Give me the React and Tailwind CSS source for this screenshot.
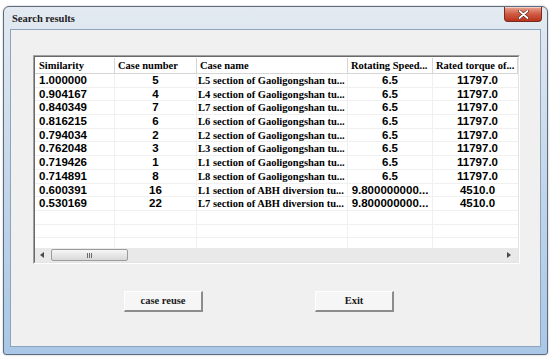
import React from "react";

const rows = [
  ["1.000000", "5", "L5 section of Gaoligongshan tu...", "6.5", "11797.0"],
  ["0.904167", "4", "L4 section of Gaoligongshan tu...", "6.5", "11797.0"],
  ["0.840349", "7", "L7 section of Gaoligongshan tu...", "6.5", "11797.0"],
  ["0.816215", "6", "L6 section of Gaoligongshan tu...", "6.5", "11797.0"],
  ["0.794034", "2", "L2 section of Gaoligongshan tu...", "6.5", "11797.0"],
  ["0.762048", "3", "L3 section of Gaoligongshan tu...", "6.5", "11797.0"],
  ["0.719426", "1", "L1 section of Gaoligongshan tu...", "6.5", "11797.0"],
  ["0.714891", "8", "L8 section of Gaoligongshan tu...", "6.5", "11797.0"],
  ["0.600391", "16", "L1 section of ABH diversion tu...", "9.800000000...", "4510.0"],
  ["0.530169", "22", "L7 section of ABH diversion tu...", "9.800000000...", "4510.0"],
];

const serif = "[font-family:'Liberation_Serif',serif]";

function Row({ r }) {
  return (
    <div className="flex h-[13.7px] shrink-0 border-b border-[#f0f0f0] text-[11.5px] font-bold leading-[13px] text-black">
      <div className="w-[80px] shrink-0 border-r border-[#f0f0f0] pl-[4px] [font-family:'Liberation_Sans',sans-serif]">{r[0]}</div>
      <div className="w-[82px] shrink-0 border-r border-[#f0f0f0] text-center [font-family:'Liberation_Sans',sans-serif]">{r[1]}</div>
      <div className="w-[151px] shrink-0 overflow-hidden whitespace-nowrap border-r border-[#f0f0f0] pl-[1px] text-[10.5px] [font-family:'Liberation_Serif',serif]">{r[2]}</div>
      <div className="w-[85px] shrink-0 border-r border-[#f0f0f0] text-center [font-family:'Liberation_Sans',sans-serif]">{r[3]}</div>
      <div className="w-[85px] shrink-0 pl-[4px] text-center [font-family:'Liberation_Sans',sans-serif]">{r[4]}</div>
    </div>
  );
}

function EmptyRow() {
  return (
    <div className="flex h-[13.7px] shrink-0 border-b border-[#f0f0f0]">
      <div className="w-[80px] shrink-0 border-r border-[#f0f0f0]" />
      <div className="w-[82px] shrink-0 border-r border-[#f0f0f0]" />
      <div className="w-[151px] shrink-0 border-r border-[#f0f0f0]" />
      <div className="w-[85px] shrink-0 border-r border-[#f0f0f0]" />
      <div className="w-[85px] shrink-0" />
    </div>
  );
}

function Button({ children }) {
  return (
    <div className="flex h-[21px] w-[79px] items-center justify-center border border-b-[2px] border-r-[2px] border-t-white border-l-white border-b-[#8c8c8c] border-r-[#8c8c8c] bg-[#f6f6f6] text-[10.5px] font-bold text-[#1a1a1a] [font-family:'Liberation_Serif',serif]">
      {children}
    </div>
  );
}

export default function App() {
  return (
    <div className="h-[361px] w-[550px] overflow-hidden bg-white pl-[3px] pt-[6px]">
      <div className="flex h-[349px] w-[545px] flex-col rounded-t-[6px] rounded-b-[3px] border border-[#5d6b7c] bg-gradient-to-b from-[#e3eaf1] via-[#c3d6ea] to-[#a9c7e6] shadow-[0_0_2px_rgba(0,0,0,0.3)]">
        <div className="flex h-[22px] shrink-0 items-start justify-between pl-[8px] pr-[5px]">
          <div className={`mt-[6px] text-[10.5px] font-bold leading-[12px] text-[#1c1c1c] ${serif}`}>Search results</div>
          <div className="flex h-[15px] w-[38px] items-center justify-center rounded-b-[4px] border border-t-0 border-[#7b2a20] bg-gradient-to-b from-[#e9a593] via-[#d05a42] to-[#b8321c] shadow-[inset_0_1px_0_rgba(255,255,255,0.5)]">
            <svg width="11" height="9" viewBox="0 0 11 9">
              <path d="M1.5 1 L9.5 8 M9.5 1 L1.5 8" stroke="#5a1a10" strokeWidth="3" strokeLinecap="round" />
              <path d="M1.5 1 L9.5 8 M9.5 1 L1.5 8" stroke="white" strokeWidth="1.8" strokeLinecap="round" />
            </svg>
          </div>
        </div>
        <div className="mx-[6px] mb-[7px] flex flex-1 flex-col border border-[#8ea4bd] bg-[#f0f0f0] pl-[22px] pt-[25px]">
          <div className="flex h-[209px] w-[487px] flex-col border border-b-white border-r-white border-l-[#a0a0a0] border-t-[#a0a0a0]">
            <div className="flex flex-1 flex-col overflow-hidden border border-[#696969] border-b-[#e3e3e3] border-r-[#e3e3e3] bg-white">
              <div className={`flex h-[17px] shrink-0 items-center border-b border-[#d5d5d5] text-[10.5px] font-bold leading-[15px] text-black ${serif}`}>
                <div className="w-[80px] shrink-0 border-r border-[#d5d5d5] pl-[4px]">Similarity</div>
                <div className="w-[82px] shrink-0 border-r border-[#d5d5d5] pl-[3px]">Case number</div>
                <div className="w-[151px] shrink-0 border-r border-[#d5d5d5] pl-[3px]">Case name</div>
                <div className="w-[85px] shrink-0 border-r border-[#d5d5d5] pl-[3px]">Rotating Speed...</div>
                <div className="w-[85px] shrink-0 border-r border-[#d5d5d5] pl-[3px] whitespace-nowrap">Rated torque of...</div>
              </div>
              <div className="flex min-h-0 flex-1 flex-col overflow-hidden">
                {rows.map((r, i) => (
                  <Row key={i} r={r} />
                ))}
                <EmptyRow />
                <EmptyRow />
                <EmptyRow />
              </div>
              <div className="flex h-[14px] shrink-0 items-center bg-[#e9e9e9] px-[4px]">
                <svg width="5" height="6" viewBox="0 0 5 6" className="ml-[1px]"><path d="M4 0 L0 3 L4 6 Z" fill="#4a4a4a" /></svg>
                <div className="ml-[6px] flex h-[12px] w-[77px] items-center justify-center rounded-[2px] border border-[#9c9c9c] bg-gradient-to-b from-[#f6f6f6] to-[#d8d8d8]">
                  <div className="flex gap-[1px]">
                    <div className="h-[5px] w-[1px] bg-[#6a6a6a]" />
                    <div className="h-[5px] w-[1px] bg-[#6a6a6a]" />
                    <div className="h-[5px] w-[1px] bg-[#6a6a6a]" />
                  </div>
                </div>
                <div className="flex-1" />
                <svg width="5" height="6" viewBox="0 0 5 6" className="mr-[3px]"><path d="M1 0 L5 3 L1 6 Z" fill="#4a4a4a" /></svg>
              </div>
            </div>
          </div>
          <div className="ml-[91px] mt-[27px] flex gap-[112px]">
            <Button>case reuse</Button>
            <Button>Exit</Button>
          </div>
        </div>
      </div>
    </div>
  );
}
